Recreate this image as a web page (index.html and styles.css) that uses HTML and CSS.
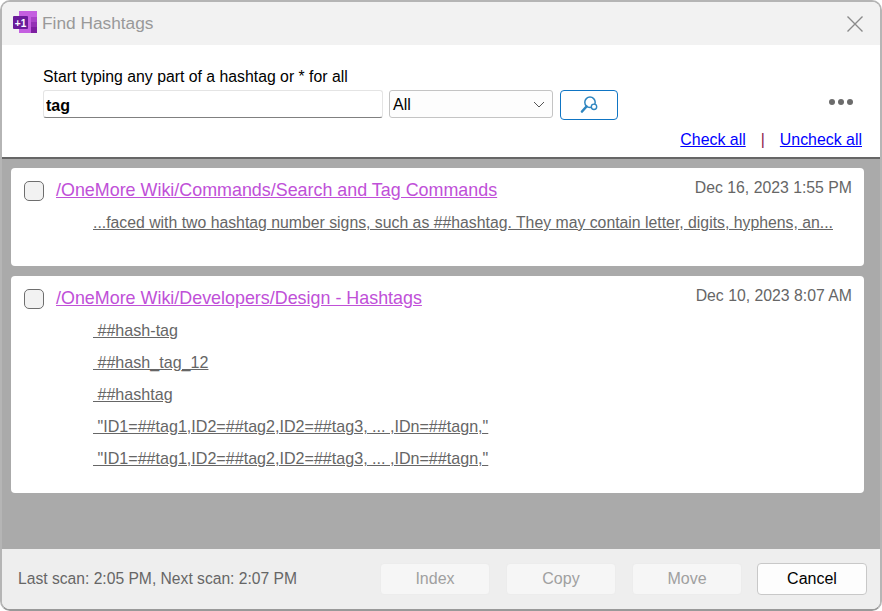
FILE: index.html
```html
<!DOCTYPE html>
<html lang="en">
  <head>
    <meta charset="UTF-8" />
    <title>Find Hashtags</title>
    <link rel="stylesheet" href="styles.css">
  </head>
  <body>
    <div class="window">
      <div class="titlebar">
        <svg class="app-icon" width="24" height="22" viewBox="0 0 24 22">
          <rect x="6" y="0" width="18" height="22" fill="#c45fe0" />
          <rect x="18" y="6" width="6" height="5" fill="#a945c8" />
          <rect x="18" y="11" width="6" height="5" fill="#9332b4" />
          <rect x="18" y="16" width="6" height="6" fill="#7d1fa0" />
          <rect x="0" y="5" width="15" height="13" rx="1" fill="#6a1b9a" />
          <text x="7.5" y="15.5" class="app-icon-text">+1</text>
        </svg>
        <span class="title">Find Hashtags</span>
        <svg class="close" width="16" height="16" viewBox="0 0 16 16">
          <path d="M0.5 0.5 L15.5 15.5 M15.5 0.5 L0.5 15.5" stroke="#8a8a8a" stroke-width="1.4" fill="none" />
        </svg>
      </div>

      <div class="panel">
        <label class="prompt" for="query">Start typing any part of a hashtag or * for all</label>
        <div class="search-row">
          <input class="query" id="query" type="text" value="tag" />
          <div class="select">
            <span>All</span>
            <svg width="12" height="7" viewBox="0 0 12 7">
              <path d="M1 1 L6 6 L11 1" stroke="#555" stroke-width="1" fill="none" />
            </svg>
          </div>
          <button class="search-btn" type="button">
            <svg width="18" height="18" viewBox="0 0 18 18">
              <circle cx="10" cy="6.3" r="5.2" stroke="#2f86c0" stroke-width="1.5" fill="none" />
              <circle cx="14" cy="10.8" r="2.7" stroke="#2f86c0" stroke-width="1.4" fill="#fff" />
              <path d="M6.5 10.5 L2 15.5" stroke="#2f86c0" stroke-width="2.6" stroke-linecap="round" />
            </svg>
          </button>
          <div class="more"><i></i><i></i><i></i></div>
        </div>
        <div class="checks">
          <a href="#">Check all</a>
          <span class="sep">|</span>
          <a href="#">Uncheck all</a>
        </div>
      </div>

      <div class="results">
        <div class="card card-short">
          <div class="card-head">
            <span class="checkbox"></span>
            <a class="page-link" href="#">/OneMore Wiki/Commands/Search and Tag Commands</a>
            <span class="stamp">Dec 16, 2023 1:55 PM</span>
          </div>
          <a class="hit hit-long" href="#">...faced with two hashtag number signs, such as ##hashtag. They may contain letter, digits, hyphens, an...</a>
        </div>
        <div class="card">
          <div class="card-head">
            <span class="checkbox"></span>
            <a class="page-link" href="#">/OneMore Wiki/Developers/Design - Hashtags</a>
            <span class="stamp">Dec 10, 2023 8:07 AM</span>
          </div>
          <a class="hit" href="#">&nbsp;##hash-tag</a>
          <a class="hit" href="#">&nbsp;##hash_tag_12</a>
          <a class="hit" href="#">&nbsp;##hashtag</a>
          <a class="hit" href="#">&nbsp;"ID1=##tag1,ID2=##tag2,ID2=##tag3, ... ,IDn=##tagn,"</a>
          <a class="hit" href="#">&nbsp;"ID1=##tag1,ID2=##tag2,ID2=##tag3, ... ,IDn=##tagn,"</a>
        </div>
      </div>

      <div class="footer">
        <span class="scan">Last scan: 2:05 PM, Next scan: 2:07 PM</span>
        <button class="btn" type="button" disabled>Index</button>
        <button class="btn" type="button" disabled>Copy</button>
        <button class="btn" type="button" disabled>Move</button>
        <button class="btn btn-cancel" type="button">Cancel</button>
      </div>
    </div>
  </body>
</html>
```

FILE: styles.css
```css
* {
  box-sizing: border-box;
}

html,
body {
  margin: 0;
  height: 100%;
  background: #ffffff;
}

body {
  font-family: "Liberation Sans", Arial, sans-serif;
  font-size: 16px;
  overflow: hidden;
}

.window {
  width: 882px;
  height: 611px;
  border: 2px solid #b5b5b5;
  border-bottom-color: #999999;
  border-radius: 10px;
  overflow: hidden;
  display: flex;
  flex-direction: column;
  background: #ffffff;
}

.titlebar {
  height: 43px;
  flex: none;
  background: #f2f2f2;
  display: flex;
  align-items: center;
  padding: 0 17px 0 11px;
}

.app-icon {
  flex: none;
  margin-bottom: 3px;
}

.app-icon-text {
  font-size: 10px;
  font-weight: bold;
  fill: #ffffff;
  text-anchor: middle;
}

.title {
  margin-left: 5px;
  font-size: 17.3px;
  color: #999999;
}

.close {
  margin-left: auto;
}

.panel {
  height: 114px;
  flex: none;
  background: #ffffff;
  border-bottom: 2px solid #666666;
  padding: 21px 18px 0 41px;
}

.prompt {
  display: block;
  height: 21px;
  line-height: 21px;
  font-size: 15.8px;
  color: #000000;
}

.search-row {
  display: flex;
  align-items: flex-start;
  margin-top: 3px;
}

.query {
  width: 340px;
  height: 28px;
  padding: 3px 2px 0;
  border: 1px solid #e4e4e4;
  border-bottom: 1px solid #808080;
  border-radius: 3px;
  font-family: inherit;
  font-size: 16px;
  font-weight: bold;
  color: #000000;
  outline: none;
}

.select {
  width: 164px;
  height: 28px;
  margin-left: 6px;
  padding: 1px 7px 0 3px;
  border: 1px solid #c4c4c4;
  border-radius: 3px;
  background: #fdfdfd;
  display: flex;
  align-items: center;
  justify-content: space-between;
  font-size: 16px;
}

.search-btn {
  width: 58px;
  height: 30px;
  margin-left: 7px;
  padding: 0;
  border: 1px solid #0f75c4;
  border-radius: 4px;
  background: #ffffff;
  display: flex;
  align-items: center;
  justify-content: center;
}

.more {
  margin: 9px 9px 0 auto;
  display: flex;
  gap: 3px;
}

.more i {
  width: 6px;
  height: 6px;
  border-radius: 50%;
  background: #6b6b6b;
}

.checks {
  margin-top: 10px;
  display: flex;
  justify-content: flex-end;
  gap: 15px;
  font-size: 15.9px;
  line-height: 20px;
}

.checks a {
  color: #0000ff;
}

.sep {
  color: #8b1a4a;
}

.results {
  flex: 1;
  background: #aaaaaa;
  padding: 9px 16px 0 9px;
}

.card {
  background: #ffffff;
  border-radius: 4px;
  padding: 13px 12px 0 13px;
  margin-bottom: 10px;
  height: 217px;
}

.card-short {
  height: 98px;
}

.card-head {
  display: flex;
  align-items: flex-start;
  height: 20px;
  margin-bottom: 11px;
}

.checkbox {
  width: 20px;
  height: 20px;
  flex: none;
  border: 1px solid #6e6e6e;
  border-radius: 5px;
  background: #f2f2f2;
}

.page-link {
  margin-left: 12px;
  font-size: 17.9px;
  line-height: 18px;
  color: #c050d8;
}

.stamp {
  margin-left: auto;
  font-size: 15.8px;
  line-height: 14px;
  color: #666666;
}

.hit {
  display: table;
  margin: 0 0 12px 69px;
  height: 20px;
  line-height: 20px;
  font-size: 16.1px;
  color: #666666;
}

.hit-long {
  margin-top: 12px;
  font-size: 15.8px;
}

.footer {
  height: 60px;
  flex: none;
  background: #eeeeee;
  display: flex;
  align-items: center;
  padding: 0 13px 0 16px;
}

.scan {
  margin-right: auto;
  font-size: 15.65px;
  color: #666666;
}

.btn {
  width: 110px;
  height: 32px;
  margin-left: 16px;
  border: 1px solid #ececec;
  border-radius: 4px;
  background: #f6f6f6;
  font-family: inherit;
  font-size: 16px;
  color: #a0a0a0;
}

.btn-cancel {
  margin-left: 15px;
  border-color: #c8c8c8;
  background: #fdfdfd;
  color: #000000;
}
```
